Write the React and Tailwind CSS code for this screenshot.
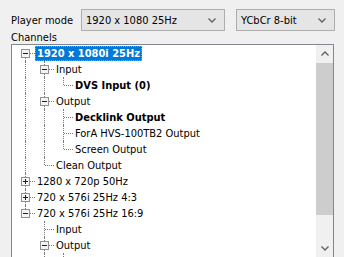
import React from 'react';

const tree = [
  {
    text: '1920 x 1080i 25Hz',
    bold: true,
    selected: true,
    open: true,
    children: [
      { text: 'Input', open: true, children: [{ text: 'DVS Input (0)', bold: true }] },
      {
        text: 'Output',
        open: true,
        children: [
          { text: 'Decklink Output', bold: true },
          { text: 'ForA HVS-100TB2 Output' },
          { text: 'Screen Output' },
        ],
      },
      { text: 'Clean Output' },
    ],
  },
  { text: '1280 x 720p 50Hz', open: false, children: [{ text: 'Input' }] },
  { text: '720 x 576i 25Hz 4:3', open: false, children: [{ text: 'Input' }] },
  {
    text: '720 x 576i 25Hz 16:9',
    open: true,
    children: [
      { text: 'Input' },
      // rows below this one are scrolled out of view, only their lines peek in
      { text: 'Output', open: true, children: [{ text: '' }, { text: '' }] },
      { text: '' },
    ],
  },
];

// flatten tree into visible rows, keeping which ancestor columns continue
const flatten = (nodes, depth = 0, cont = [], out = []) => {
  nodes.forEach((n, i) => {
    const last = i === nodes.length - 1;
    const first = depth === 0 && i === 0;
    out.push({ ...n, depth, cont, last, first });
    if (n.children && n.open) flatten(n.children, depth + 1, [...cont, !last], out);
  });
  return out;
};

const rows = flatten(tree);
const col = (d) => 13 + d * 19;

const Chevron = ({ up, className }) => (
  <svg width="8" height="5" viewBox="0 0 8 5" className={className}>
    <polyline
      points={up ? '0.5,4.5 4,1 7.5,4.5' : '0.5,0.5 4,4 7.5,0.5'}
      fill="none"
      stroke="currentColor"
      strokeWidth="1.3"
    />
  </svg>
);

const Expander = ({ open }) => (
  <div className="absolute top-[4px] z-10 flex h-[9px] w-[9px] items-center justify-center border border-[#919191] bg-[#f4f4f4]">
    <div className="h-px w-[5px] bg-[#1e1e1e]" />
    {!open && <div className="absolute h-[5px] w-px bg-[#1e1e1e]" />}
  </div>
);

const Row = ({ row }) => {
  const x = col(row.depth);
  const hasKids = !!row.children;
  return (
    <div className="relative h-[16px] shrink-0">
      {row.cont.map((c, d) =>
        c ? (
          <div
            key={d}
            className="absolute top-0 h-full border-l border-dotted border-[#7a7a7a]"
            style={{ left: col(d) }}
          />
        ) : null
      )}
      {/* own vertical connector */}
      <div
        className="absolute border-l border-dotted border-[#7a7a7a]"
        style={{
          left: x,
          top: row.first ? 8 : 0,
          height: row.last ? (row.first ? 0 : 8) : row.first ? 8 : 16,
        }}
      />
      {/* horizontal connector */}
      <div
        className="absolute top-[8px] border-t border-dotted border-[#7a7a7a]"
        style={{ left: x + 1, width: 9 }}
      />
      {hasKids && (
        <div className="absolute" style={{ left: x - 4 }}>
          <Expander open={row.open} />
        </div>
      )}
      {row.text && (
        <div
          className={`absolute top-[1px] flex h-[15px] items-center whitespace-nowrap px-[1px] ${
            row.selected
              ? 'border border-dotted border-[#ff8728] bg-[#0078d7] text-white'
              : 'border border-transparent text-black'
          } ${row.bold ? 'font-bold' : ''}`}
          style={{ left: x + 10 }}
        >
          {row.text}
        </div>
      )}
    </div>
  );
};

const Combo = ({ value, className }) => (
  <div
    className={`flex h-[22px] items-center justify-between border border-[#adadad] bg-[#e5e5e5] pl-[4px] pr-[8px] ${className}`}
  >
    <span>{value}</span>
    <Chevron className="text-[#606060]" />
  </div>
);

export default function App() {
  return (
    <div
      className="h-[257px] w-[344px] overflow-hidden bg-[#f0f0f0] text-[11px] leading-none text-black"
      style={{ fontFamily: '"DejaVu Sans Condensed", "DejaVu Sans", sans-serif' }}
    >
      <div className="flex items-center pl-[11px] pt-[9px]">
        <span className="w-[70px]">Player mode</span>
        <Combo value="1920 x 1080 25Hz" className="w-[144px]" />
        <Combo value="YCbCr 8-bit" className="ml-[11px] w-[99px]" />
      </div>
      <div className="pl-[11px] pt-[1px]">
        <div className="h-[12px]">Channels</div>
        <div className="flex h-[214px] w-[323px] border border-[#828790] bg-white">
          <div className="flex flex-1 flex-col overflow-hidden">
            {rows.map((r, i) => (
              <Row key={i} row={r} />
            ))}
          </div>
          <div className="flex w-[17px] flex-col bg-[#f0f0f0]">
            <div className="flex h-[17px] items-center justify-center text-[#606060]">
              <Chevron up />
            </div>
            <div className="flex-1">
              <div className="mt-px h-[152px] bg-[#cdcdcd]" />
            </div>
            <div className="flex h-[17px] items-center justify-center text-[#606060]">
              <Chevron />
            </div>
          </div>
        </div>
      </div>
    </div>
  );
}
